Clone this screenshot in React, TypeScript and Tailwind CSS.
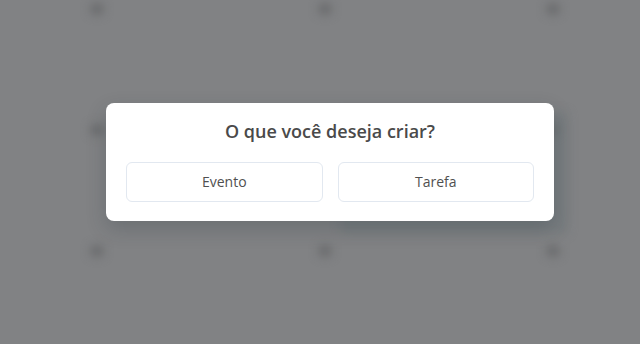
import React from "react";

const cells = Array.from({ length: 9 }, (_, i) => i);

export default function App() {
  return (
    <div
      className="relative w-[640px] h-[344px] overflow-hidden bg-[#818284]"
      style={{ fontFamily: '"Open Sans", "Noto Sans", sans-serif' }}
    >
      {/* blurred calendar behind the overlay */}
      <div className="absolute inset-0 blur-[5px]">
        <div className="ml-[-17px] w-[684px] grid grid-cols-3 grid-rows-3 h-[366px] pt-[3px]">
          {cells.map((i) => (
            <div key={i} className="flex justify-center">
              <div className="w-[14px] h-[12px] rounded-md bg-[#6a6b6d]" />
            </div>
          ))}
        </div>
        <div className="absolute left-[340px] top-[112px] w-[228px] h-[122px] bg-[#71787c] opacity-60 rounded" />
      </div>

      <div className="relative h-full flex items-start justify-center pt-[103px] pl-[20px]">
        <div className="w-[448px] h-[118px] bg-white rounded-lg shadow-[0_8px_20px_rgba(30,45,55,0.22)] px-5 pt-[15px] flex flex-col">
          <h2 className="text-center text-[18px] leading-[26px] font-semibold text-[#4a4a4a]">
            O que você deseja criar?
          </h2>
          <div className="mt-[18px] grid grid-cols-2 gap-[15px]">
            <button className="h-[40px] pb-[2px] rounded-md border border-[#e2e8f0] bg-white text-[14px] text-[#505050]">
              Evento
            </button>
            <button className="h-[40px] pb-[2px] rounded-md border border-[#e2e8f0] bg-white text-[14px] text-[#505050]">
              Tarefa
            </button>
          </div>
        </div>
      </div>
    </div>
  );
}
